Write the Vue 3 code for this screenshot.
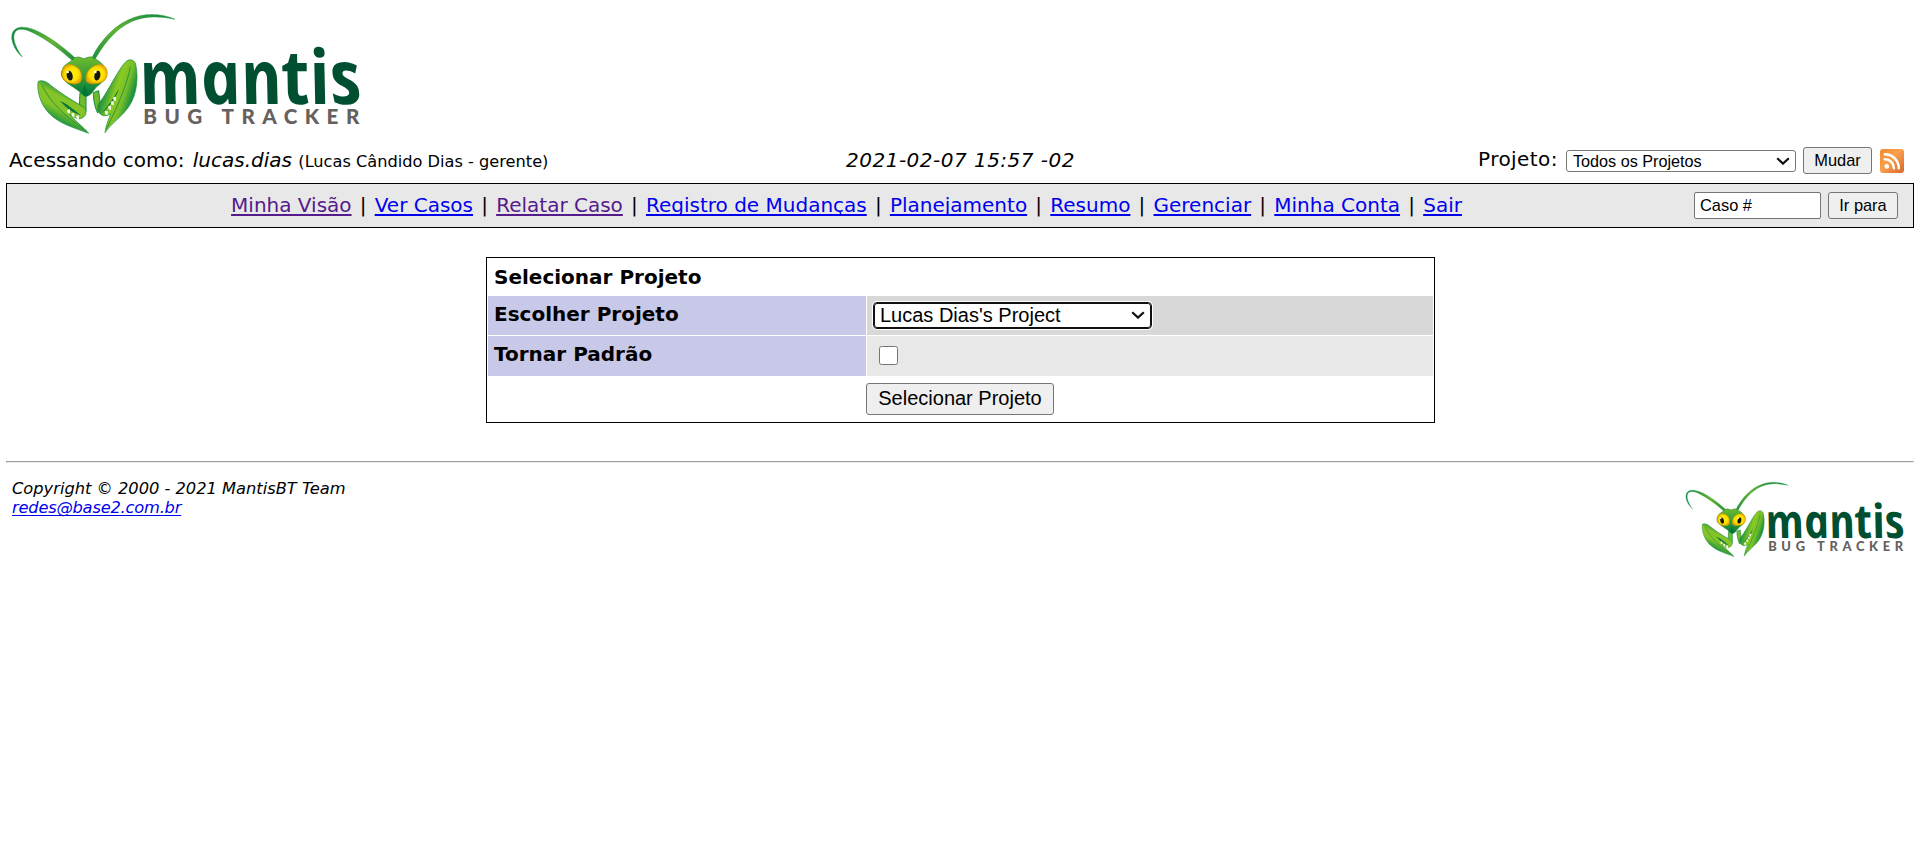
<script setup>
import { ref, h } from 'vue'

const links = [
  { text: 'Minha Visão', visited: true },
  { text: 'Ver Casos' },
  { text: 'Relatar Caso', visited: true },
  { text: 'Registro de Mudanças' },
  { text: 'Planejamento' },
  { text: 'Resumo' },
  { text: 'Gerenciar' },
  { text: 'Minha Conta' },
  { text: 'Sair' },
]
const issue = ref('Caso #')
const makeDefault = ref(false)

const p = (d, fill, extra = {}) => h('path', { d, fill, ...extra })
const stop = (offset, color) => h('stop', { offset, 'stop-color': color })

const MantisLogo = (props) => {
  const id = props.uid
  const u = (n) => `url(#${id}-${n})`
  return h('svg', { viewBox: '33 42 1047 360', role: 'img', 'aria-label': 'Mantis Bug Tracker' }, [
    h('defs', [
      h('linearGradient', { id: `${id}-head`, x1: 0, y1: 0, x2: 0, y2: 1 }, [stop(0, '#6dbb2c'), stop(0.4, '#42a338'), stop(1, '#00793b')]),
      h('linearGradient', { id: `${id}-left`, x1: 0.65, y1: 0.2, x2: 0.35, y2: 0.8 }, [stop(0, '#1d9140'), stop(0.28, '#87c527'), stop(0.6, '#82c328'), stop(1, '#078a42')]),
      h('linearGradient', { id: `${id}-right`, x1: 0.25, y1: 0.3, x2: 0.85, y2: 0.65 }, [stop(0, '#25953d'), stop(0.35, '#8aca24'), stop(0.65, '#78be29'), stop(1, '#068940')]),
      h('linearGradient', { id: `${id}-ant`, x1: 0, y1: 0, x2: 1, y2: 0 }, [stop(0, '#068647'), stop(0.6, '#66b32e'), stop(1, '#168c43')]),
      h('linearGradient', { id: `${id}-ant2`, x1: 0, y1: 1, x2: 1, y2: 0 }, [stop(0, '#168c43'), stop(0.5, '#66b32e'), stop(1, '#068647')]),
      h('radialGradient', { id: `${id}-eye` }, [stop(0, '#fff200'), stop(0.7, '#ffe000'), stop(1, '#e9a700')]),
    ]),
    p('M67 171C43 151 32 119 36 104C42 76 73 78 102 89C141 105 189 139 232 180L223 187C177 145 137 117 99 98C68 83 49 85 43 101C36 119 52 151 67 171Z', u('ant'), { stroke: '#2d9a3c', 'stroke-width': 1.5 }),
    p('M271 186C287 142 331 84 384 60C431 37 484 40 525 58C475 47 431 48 394 65C343 88 306 138 280 188Z', u('ant2'), { stroke: '#2d9a3c', 'stroke-width': 1.5 }),
    p('M240 278C239 296 238 309 239 324L258 335L258 288ZM280 278C280 303 286 325 293 339L303 320C299 304 298 288 296 272Z', '#6ebc2d', { stroke: '#168b3d', 'stroke-width': 3 }),
    p('M115 244C126 239 141 245 152 256C180 279 222 304 249 320C264 331 260 351 241 356C228 358 218 350 207 340C223 361 249 380 266 400C219 382 165 368 137 328C116 300 110 260 115 244Z', u('left'), { stroke: '#118840', 'stroke-width': 2 }),
    p('M315 398C318 375 326 358 332 341C322 350 307 350 298 339C289 325 293 311 303 302C328 266 354 211 374 189C384 176 401 176 407 192C418 244 407 302 373 337C352 360 329 376 315 398Z', u('right'), { stroke: '#118840', 'stroke-width': 2 }),
    h('path', { d: 'M126 255C142 289 176 338 261 394M391 200C383 246 359 307 319 387', fill: 'none', stroke: '#2a9638', 'stroke-width': 3 }),
    p('M180 303C200 311 213 322 242 346C219 338 205 330 180 303ZM356 266C351 291 330 318 306 338C325 315 336 303 356 266Z', '#09743b'),
    ...[[206, 334], [219, 344], [233, 352], [344, 296], [337, 309], [329, 323], [319, 338]].map(([x, y], i) =>
      p(`M${x - 5} ${y - 4}L${x + 4} ${y - 6}L${x + 4} ${y + 7}L${x - 3} ${y + 5}Z`, '#f5fae9', { key: i })),
    p('M190 201C205 185 221 181 223 173Q237 168 247 175Q254 177 263 172Q276 167 283 176C299 182 313 195 318 211C326 243 291 254 283 269Q260 304 242 278C223 259 180 244 184 218Z', u('head'), { stroke: '#268d35', 'stroke-width': 2 }),
    p('M187 213C190 192 211 190 225 198C244 207 248 226 243 243C236 257 205 253 193 241C185 233 184 223 187 213Z', u('eye'), { stroke: '#bf9c00', 'stroke-width': 2 }),
    p('M321 213C317 192 297 190 282 198C264 207 255 225 259 243C267 256 301 253 314 241C321 233 323 223 321 213Z', u('eye'), { stroke: '#bf9c00', 'stroke-width': 2 }),
    h('ellipse', { cx: 209, cy: 227, rx: 9, ry: 15, fill: '#171711', transform: 'rotate(-12 209 227)' }),
    h('ellipse', { cx: 292, cy: 227, rx: 9, ry: 15, fill: '#171711', transform: 'rotate(12 292 227)' }),
    h('circle', { cx: 203, cy: 216, r: 4, fill: '#fff' }),
    h('circle', { cx: 286, cy: 216, r: 4, fill: '#fff' }),
    p('M253 252L265 284L258 290L248 283Z', '#007439'),
    h('text', { x: 0, y: 0, transform: 'translate(431 313) skewX(12)', 'font-family': '"Open Sans", sans-serif', 'font-weight': 700, 'font-style': 'italic', 'font-size': 226, fill: '#004f30', textLength: 668, lengthAdjust: 'spacingAndGlyphs' }, 'mantis'),
    h('text', { x: 430, y: 371, 'font-family': 'Lato, sans-serif', 'font-weight': 900, 'font-size': 62, fill: '#66605e', textLength: 648, lengthAdjust: 'spacing' }, 'BUG TRACKER'),
  ])
}
MantisLogo.props = ['uid']
</script>

<template>
  <div class="page">
    <header class="brand"><MantisLogo uid="top" class="logo" /></header>

    <div class="login">
      <div class="who">Acessando como: <i>lucas.dias</i> <small>(Lucas Cândido Dias - gerente)</small></div>
      <i class="date">2021-02-07 15:57 -02</i>
      <form class="switch" @submit.prevent>
        <label for="project">Projeto:</label>
        <span class="picker mini">
          <select id="project"><option>Todos os Projetos</option></select>
          <svg viewBox="0 0 14 8"><path d="M1.2 1.2 7 6.6 12.8 1.2" /></svg>
        </span>
        <button class="change">Mudar</button>
        <svg class="rss" viewBox="0 0 24 24">
          <defs><linearGradient id="rss" x1="0" y1="0" x2="1" y2="1"><stop offset="0" stop-color="#f18a32" /><stop offset=".45" stop-color="#f9a04d" /><stop offset="1" stop-color="#d9662b" /></linearGradient></defs>
          <rect width="24" height="24" rx="3" fill="url(#rss)" />
          <circle cx="6.8" cy="17.4" r="2.3" fill="#fff" />
          <path d="M4.8 10.2A9 9 0 0 1 13.9 19.3M4.8 5.3A13.9 13.9 0 0 1 18.8 19.3" fill="none" stroke="#fff" stroke-width="2.5" stroke-linecap="round" />
        </svg>
      </form>
    </div>

    <nav class="menu">
      <div class="links">
        <template v-for="(l, i) in links" :key="l.text">
          <span v-if="i" class="bar">|</span>
          <a href="#" :class="{ visited: l.visited }">{{ l.text }}</a>
        </template>
      </div>
      <form class="jump" @submit.prevent>
        <input v-model="issue" type="text" aria-label="Caso">
        <button>Ir para</button>
      </form>
    </nav>

    <form class="panel" @submit.prevent>
      <div class="title">Selecionar Projeto</div>
      <label class="label" for="choose">Escolher Projeto</label>
      <div class="value dark">
        <span class="picker choose">
          <select id="choose"><option>Lucas Dias's Project</option></select>
          <svg viewBox="0 0 14 8"><path d="M1.2 1.2 7 6.6 12.8 1.2" /></svg>
        </span>
      </div>
      <label class="label" for="default">Tornar Padrão</label>
      <div class="value light"><input id="default" v-model="makeDefault" type="checkbox"></div>
      <div class="actions"><button>Selecionar Projeto</button></div>
    </form>

    <hr>
    <footer class="footer">
      <address>Copyright © 2000 - 2021 MantisBT Team<br><a href="#">redes@base2.com.br</a></address>
      <MantisLogo uid="bottom" class="logo-small" />
    </footer>
  </div>
</template>

<style>
body { background: #fff; }
</style>

<style scoped>
.page { box-sizing: border-box; width: 1920px; padding: 14px 6px 0; font: 20px/24px Verdana, "DejaVu Sans", sans-serif; color: #000; }
.page form { margin: 0; }
.brand { height: 130px; padding-left: 5px; }
.logo { display: block; width: 349px; height: 120px; overflow: visible; }
.login { display: grid; grid-template-columns: 1fr auto 1fr; align-items: center; height: 33px; margin-bottom: 6px; padding: 0 10px 0 3px; white-space: nowrap; }
.who { padding-top: 1px; }
.who i { margin-left: 2px; }
.who small { font-size: 16.2px; }
.date { margin: -1px 0 0 8px; letter-spacing: .48px; }
.switch { display: flex; align-items: center; justify-content: flex-end; }
.switch label { margin: -3px 8px 0 0; letter-spacing: .45px; }
select, button, input { box-sizing: border-box; margin: 0; font-family: Arial, "Liberation Sans", sans-serif; color: #000; }
select { appearance: none; display: block; width: 100%; height: 100%; background: #fff; border: 1px solid #767676; border-radius: 3px; }
button { padding: 0; background: #efefef; border: 1px solid #767676; border-radius: 3px; white-space: nowrap; }
.picker { position: relative; display: block; }
.picker svg { position: absolute; right: 6px; top: 7px; width: 14px; height: 8px; pointer-events: none; }
.picker path { fill: none; stroke: #101010; stroke-width: 2.2; }
.mini { width: 230px; height: 22px; margin-right: 7px; }
.mini select { padding: 0 0 0 6px; font-size: 16.2px; line-height: 20px; }
.change { width: 69px; height: 27px; font-size: 16.4px; margin-right: 8px; }
.rss { display: block; width: 24px; height: 24px; }
.menu { display: flex; align-items: center; box-sizing: border-box; height: 45px; background: #e8e8e8; border: 1px solid #000; padding-right: 15px; }
.links { flex: 1; display: flex; justify-content: center; white-space: nowrap; padding: 0 8px 2px 0; }
.bar { width: 23.15px; text-align: center; }
a { color: #00e; text-decoration: underline; text-decoration-thickness: 2px; text-underline-offset: 2px; text-decoration-skip-ink: none; }
a.visited { color: #551a8b; }
.jump { display: flex; gap: 7px; }
.jump input { width: 127px; height: 27px; padding: 0 5px 1px; font-size: 16.4px; border: 1px solid #767676; border-radius: 2px; background: #fff; }
.jump button { width: 70px; height: 27px; font-size: 16.4px; }
.panel { display: grid; grid-template-columns: 378px 566px; grid-template-rows: 36px 39px 40px 45px; gap: 1px; box-sizing: border-box; width: 949px; height: 166px; padding: 1px; border: 1px solid #000; }
.page .panel { margin: 29px 0 0 480px; }
.title { grid-column: 1 / 3; padding: 6px 0 0 6px; font-weight: bold; }
.label { padding: 6px 0 0 6px; background: #c8c8e8; font-weight: bold; }
.value { display: flex; align-items: center; padding-left: 7px; }
.dark { background: #d8d8d8; }
.light { background: #e8e8e8; padding: 0 0 2px 12px; }
.choose { width: 277px; height: 25px; }
.choose select { font-size: 20px; line-height: 22px; padding: 0 0 1px 5px; border-color: #101010; outline: 1px solid #101010; box-shadow: 0 0 0 2px #fff; }
.choose svg { right: 6px; top: 8px; }
.light input { width: 19px; height: 19px; }
.actions { grid-column: 2; margin-left: -1px; padding-top: 6px; }
.actions button { display: block; width: 188px; height: 32px; padding-bottom: 2px; font-size: 20px; }
hr { height: 2px; box-sizing: border-box; margin: 38px 0 19px; border: 1px solid; border-color: #9a9a9a #eee #eee #9a9a9a; }
.footer { display: flex; justify-content: space-between; padding: 0 10px 0 6px; }
address { margin-top: -3px; font-size: 16.25px; line-height: 19px; }
address a { text-decoration-thickness: 1px; letter-spacing: -.2px; }
.logo-small { display: block; width: 219px; height: 75px; overflow: visible; }
</style>
